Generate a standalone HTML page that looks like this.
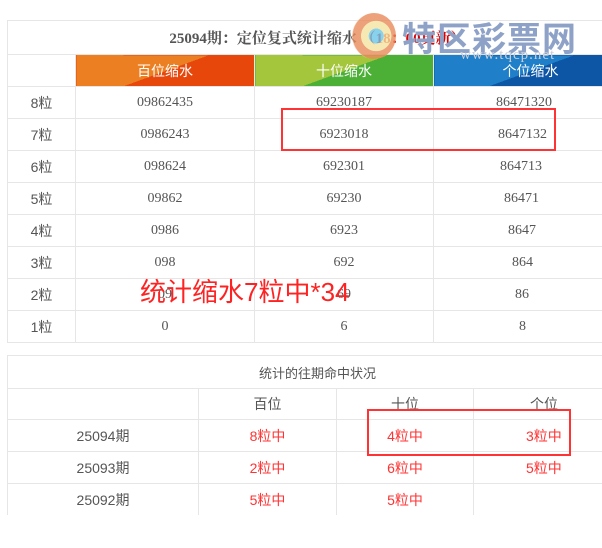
<!DOCTYPE html>
<html><head><meta charset="utf-8"><style>
body{margin:0;width:602px;height:548px;background:#fff;position:relative;overflow:hidden;font-family:"Liberation Serif","Noto Serif CJK SC",serif;color:#555;}
.a{position:absolute;}
table{border-collapse:collapse;position:absolute;table-layout:fixed;}
td{border:1px solid #e6e6e6;text-align:center;font-size:14px;padding:0;}
.s{font-family:"Liberation Sans","Noto Sans CJK SC",sans-serif;}
.r{color:#f33;}
</style></head><body>
<table style="left:7px;top:20px;width:620px">
<col style="width:68px"><col style="width:179px"><col style="width:179px"><col style="width:194px">
<tr style="height:34px"><td colspan="4" style="font-weight:bold;font-size:15px;color:#555">25094期：定位复式统计缩水 <span style="color:#d00">（18：00更新）</span></td></tr>
<tr style="height:32px" class="s"><td></td>
<td style="color:#fff;background:linear-gradient(160deg,#ec7f22 50%,#e8470c 50%)">百位缩水</td>
<td style="color:#fff;background:linear-gradient(160deg,#a3c63c 50%,#4caf36 50%)">十位缩水</td>
<td style="color:#fff;background:linear-gradient(160deg,#1f7fc9 50%,#0c56a5 50%)">个位缩水</td></tr>
<tr style="height:32px"><td class="s">8粒</td><td>09862435</td><td>69230187</td><td style="text-align:left;padding-left:62px">86471320</td></tr>
<tr style="height:32px"><td class="s">7粒</td><td>0986243</td><td>6923018</td><td style="text-align:left;padding-left:64px">8647132</td></tr>
<tr style="height:32px"><td class="s">6粒</td><td>098624</td><td>692301</td><td style="text-align:left;padding-left:66px">864713</td></tr>
<tr style="height:32px"><td class="s">5粒</td><td>09862</td><td>69230</td><td style="text-align:left;padding-left:70px">86471</td></tr>
<tr style="height:32px"><td class="s">4粒</td><td>0986</td><td>6923</td><td style="text-align:left;padding-left:74px">8647</td></tr>
<tr style="height:32px"><td class="s">3粒</td><td>098</td><td>692</td><td style="text-align:left;padding-left:78px">864</td></tr>
<tr style="height:32px"><td class="s">2粒</td><td>09</td><td>69</td><td style="text-align:left;padding-left:81px">86</td></tr>
<tr style="height:32px"><td class="s">1粒</td><td>0</td><td>6</td><td style="text-align:left;padding-left:85px">8</td></tr>
</table>
<div class="a" style="left:7px;top:355px;width:620px;height:160px;overflow:hidden">
<table class="s" style="left:0;top:0;width:620px">
<col style="width:191px"><col style="width:138px"><col style="width:137px"><col style="width:154px">
<tr style="height:33px"><td colspan="4" style="font-size:13px">统计的往期命中状况</td></tr>
<tr style="height:31px"><td></td><td>百位</td><td>十位</td><td style="text-align:left;padding-left:56px">个位</td></tr>
<tr style="height:32px"><td>25094期</td><td class="r">8粒中</td><td class="r">4粒中</td><td class="r" style="text-align:left;padding-left:52px">3粒中</td></tr>
<tr style="height:32px"><td>25093期</td><td class="r">2粒中</td><td class="r">6粒中</td><td class="r" style="text-align:left;padding-left:52px">5粒中</td></tr>
<tr style="height:32px"><td>25092期</td><td class="r">5粒中</td><td class="r">5粒中</td><td></td></tr>
</table></div>
<div class="a" style="left:281px;top:108px;width:271px;height:39px;border:2px solid #f33"></div>
<div class="a" style="left:367px;top:409px;width:200px;height:43px;border:2px solid #f33"></div>
<div class="a s" style="left:140px;top:272px;font-size:26px;color:#f22;">统计缩水7粒中*34</div>
<div class="a" style="left:352px;top:13px;width:44px;height:46px;border-radius:50%;background:radial-gradient(circle at 55% 50%,#6ac6e8 0 22%,#f3e3a0 23% 45%,#e98a5a 46% 70%,#f6d0b8 71%);opacity:.8"></div>
<div class="a s" style="left:402px;top:12px;font-size:34px;font-weight:bold;color:#8ea2c8;letter-spacing:1px">特区彩票网</div>
<div class="a" style="left:460px;top:47px;font-size:15px;color:#c9ced8;letter-spacing:1px">www.tqcp.net</div>
</body></html>
